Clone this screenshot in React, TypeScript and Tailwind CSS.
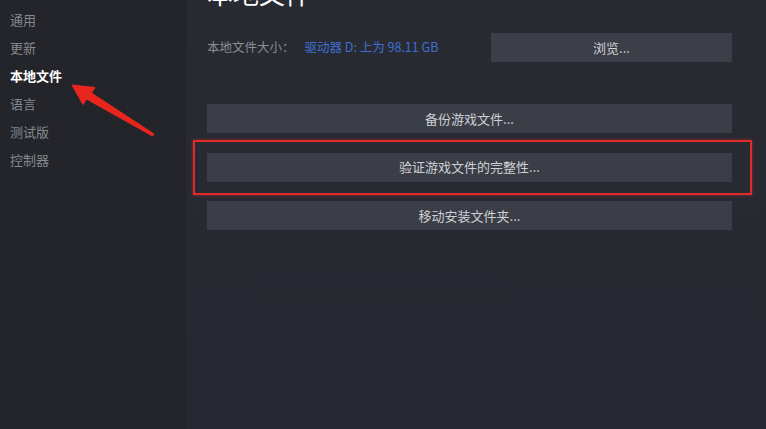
import React from "react";

const NAV = ["通用", "更新", "本地文件", "语言", "测试版", "控制器"];
const ACTIONS = ["备份游戏文件...", "验证游戏文件的完整性...", "移动安装文件夹..."];

const FONT = "font-['Noto_Sans_CJK_SC','Noto_Sans',sans-serif]";

function RedArrow() {
  // annotation arrow pointing at the active nav item
  return (
    <svg className="absolute left-0 top-0 pointer-events-none" width="200" height="160" viewBox="0 0 200 160">
      <polygon
        points="72,85 95,87.5 91.5,93 154,134 152.5,136 86.5,99 83,104.5"
        fill="#e8261e"
        stroke="#e8261e"
        strokeWidth="1"
        strokeLinejoin="round"
      />
    </svg>
  );
}

export default function App() {
  return (
    <div className={`relative w-[766px] h-[429px] flex overflow-hidden bg-[#272931] ${FONT}`}>
      {/* Sidebar */}
      <aside className="w-[186px] shrink-0 bg-[#23252a] pt-[6px] pl-[10px]">
        {NAV.map((item) => (
          <div
            key={item}
            className={
              item === "本地文件"
                ? "h-[28px] leading-[28px] text-[13px] font-bold text-white"
                : "h-[28px] leading-[28px] text-[13px] text-[#85888f]"
            }
          >
            {item}
          </div>
        ))}
      </aside>

      {/* Main panel */}
      <main className="flex-1 pl-[21px] pr-[34px] bg-gradient-to-b from-[#292b33] to-[#262831]">
        <h1 className="-mt-[20px] h-[26px] leading-[26px] text-[26px] text-white">本地文件</h1>

        <div className="mt-[27px] h-[29px] flex items-center">
          <div className="flex-1 flex items-center text-[12.5px]">
            <span className="text-[#8a8d94]">本地文件大小：</span>
            <span className="ml-[10px] text-[#3f6fd3]">驱动器 D: 上为 98.11 GB</span>
          </div>
          <button className="w-[241px] h-[29px] bg-[#3c3f48] text-[13px] text-[#cdd0d5]">浏览...</button>
        </div>

        <div className="mt-[42px] flex flex-col gap-[19.5px]">
          {ACTIONS.map((label) => (
            <button key={label} className="w-full h-[29px] bg-[#3b3e47] text-[13px] text-[#cdd0d5]">
              {label}
            </button>
          ))}
        </div>
      </main>

      {/* Annotations */}
      <div className="absolute left-[193px] top-[140px] w-[559px] h-[55px] border-2 border-[#e02b2b] shadow-[0_0_3px_rgba(224,43,43,0.6)] pointer-events-none" />
      <RedArrow />
    </div>
  );
}
